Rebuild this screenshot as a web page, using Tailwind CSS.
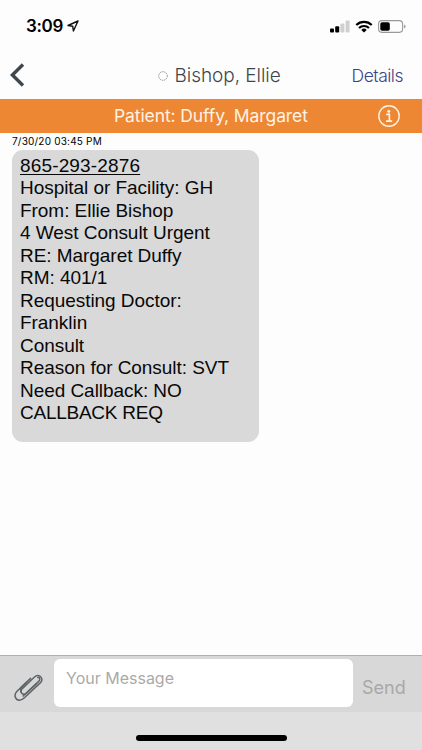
<!DOCTYPE html>
<html lang="en">
<head>
    <meta charset="UTF-8">
    <meta name="viewport" content="width=device-width, initial-scale=1.0">
    <title>Messages</title>
    <script src="https://cdn.jsdelivr.net/npm/@tailwindcss/browser@4"></script>
</head>
<body class="bg-[#fdfdfd] font-['Inter',sans-serif] text-black">
    <div class="w-[422px] h-[750px] flex flex-col overflow-hidden">
        <!-- Status bar -->
        <div class="h-[52px] flex items-center pl-[26px] pr-[16px]">
            <span class="text-[17px] font-semibold leading-none tracking-[-0.35px]">3:09</span>
            <svg class="w-[12px] h-[12px] ml-[4px]" viewBox="0 0 12 12" fill="none" stroke="#111" stroke-width="1.4" stroke-linejoin="round">
                <path d="M11 1 1 5.5 5.7 6.2 6.4 11Z"/>
            </svg>
            <div class="ml-auto flex items-center">
                <svg class="w-[20px] h-[13px]" viewBox="0 0 20 13">
                    <rect x="0" y="8.5" width="4" height="4" rx="1"/>
                    <rect x="5.2" y="6.3" width="4" height="6.2" rx="1"/>
                    <rect x="10.4" y="3.5" width="4" height="9" rx="1" fill="#d0d0d0"/>
                    <rect x="15.6" y="0.6" width="4" height="11.9" rx="1" fill="#d0d0d0"/>
                </svg>
                <svg class="w-[18px] h-[13px] ml-[5px]" viewBox="0 0 18 13" fill="none" stroke="#000" stroke-width="2.2">
                    <path d="M1.3 5A11 11 0 0 1 16.7 5"/>
                    <path d="M4 8A7.2 7.2 0 0 1 14 8"/>
                    <path d="M9 12.6 6.3 9.9A3.8 3.8 0 0 1 11.7 9.9Z" fill="#000" stroke="none"/>
                </svg>
                <svg class="w-[28px] h-[13px] ml-[5px]" viewBox="0 0 28 13">
                    <rect x="0.6" y="0.6" width="24" height="11.8" rx="3.3" fill="none" stroke="#999" stroke-width="1.1"/>
                    <rect x="2.3" y="2.3" width="9.5" height="8.4" rx="1.8"/>
                    <path d="M26.1 4.4Q27.6 5 27.6 6.5T26.1 8.6Z" fill="#999"/>
                </svg>
            </div>
        </div>

        <!-- Navigation -->
        <div class="h-[47px] grid grid-cols-[80px_1fr_80px] items-center">
            <svg class="w-[16px] h-[24px] ml-[9px] -mt-[2px]" viewBox="0 0 16 24" fill="none" stroke="#40474c" stroke-width="3.4">
                <path d="M14 1.5 3.4 12 14 22.5"/>
            </svg>
            <div class="flex items-center pl-[77.5px]">
                <svg class="w-[10px] h-[10px]" viewBox="0 0 10 10" fill="none" stroke="#888" stroke-width="0.9" stroke-dasharray="1.4 0.7">
                    <circle cx="5" cy="5" r="4.3"/>
                </svg>
                <span class="ml-[7px] text-[19px] font-light leading-none tracking-[-0.05px] text-[#40474c] whitespace-nowrap">Bishop, Ellie</span>
            </div>
            <span class="justify-self-end mr-[19px] text-[17.5px] font-light leading-none tracking-[-0.5px] text-[#3d4387]">Details</span>
        </div>

        <!-- Patient banner -->
        <div class="h-[34px] bg-[#ed8733] flex items-center pl-[114px] pr-[22px] text-[#fff3e4]">
            <span class="text-[17.5px] leading-none tracking-[-0.1px] whitespace-nowrap">Patient: Duffy, Margaret</span>
            <svg class="w-[22px] h-[22px] ml-auto" viewBox="0 0 22 22" fill="none" stroke="currentColor" stroke-width="1.4">
                <circle cx="11" cy="11" r="10.2"/>
                <circle cx="10.8" cy="6.3" r="1.5" fill="currentColor" stroke="none"/>
                <path d="M8.2 9.4H11.4V16M8 16.1H14.2" stroke-width="1.6"/>
            </svg>
        </div>

        <!-- Conversation -->
        <div class="flex-1 pl-[12px]">
            <div class="h-[17px] pt-[2px] text-[10px] leading-[12px] tracking-[0.2px]">7/30/20 03:45 PM</div>
            <div class="w-[247px] h-[292px] rounded-[11px] bg-[#d9d9d9] pl-[8px] pt-[5px] font-['Liberation_Sans',sans-serif] text-[19px] leading-[22.45px] tracking-[-0.05px] whitespace-nowrap text-[#080808]">
                <p class="underline decoration-1 underline-offset-2 tracking-[0.15px]">865-293-2876</p>
                <p>Hospital or Facility: GH</p>
                <p>From: Ellie Bishop</p>
                <p>4 West Consult Urgent</p>
                <p>RE: Margaret Duffy</p>
                <p>RM: 401/1</p>
                <p>Requesting Doctor:</p>
                <p>Franklin</p>
                <p>Consult</p>
                <p>Reason for Consult: SVT</p>
                <p>Need Callback: NO</p>
                <p class="tracking-[-0.25px]">CALLBACK REQ</p>
            </div>
        </div>

        <!-- Composer -->
        <div class="h-[57px] bg-[#d8d8d8] border-t border-[#b0b0b0] flex items-start">
            <svg class="w-[30px] h-[28px] ml-[14px] mt-[18px]" viewBox="0 0 30 28" fill="none" stroke="#5d6366" stroke-width="1.5" stroke-linecap="round" stroke-linejoin="round">
                <path d="M12.5 8.2 3 17.2C-.6 20.8 1.2 26.2 5.3 26.2 7.5 26.2 9 25 10.4 23.7L26.5 8.6C29.5 5.6 27 1 23.2 1.6 21.7 1.8 20.8 2.7 19.7 3.7L8.3 14.6C5.4 17.6 8.6 22.4 12.3 19.2L22.3 9.8"/>
                <path d="M16.6 4.4 7.4 13.1C6.2 14.4 6.4 16 7 17.8M23.8 3.4C26 3.1 26.4 5.7 24.9 7.1L9.2 22"/>
            </svg>
            <div class="w-[299px] h-[48px] ml-[10px] mt-[3px] rounded-[6px] bg-white pl-[12px] pt-[9px] text-[16px] leading-[20px] text-[#aaa]">Your Message</div>
            <span class="ml-[9px] mt-[22px] text-[18px] leading-[20px] text-[#a8a8a8]">Send</span>
        </div>
        <div class="h-[38px] bg-[#e0e0e0] pt-[23px]">
            <div class="w-[151px] h-[6px] mx-auto rounded-full bg-black"></div>
        </div>
    </div>
</body>
</html>
